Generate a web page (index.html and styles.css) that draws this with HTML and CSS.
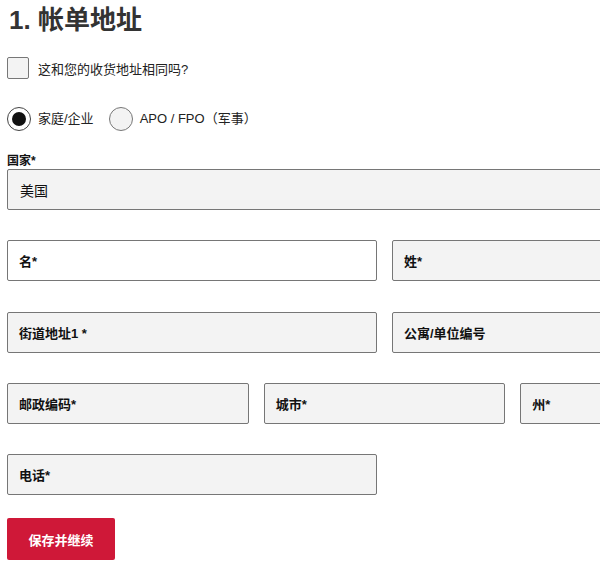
FILE: index.html
```html
<!DOCTYPE html>
<html lang="zh-CN">
<head>
<meta charset="utf-8">
<title>帐单地址</title>
<link rel="stylesheet" href="styles.css">
</head>
<body>
<div class="viewport">
<div class="form">
  <h1 class="title">1. 帐单地址</h1>

  <label class="check-row">
    <span class="checkbox"></span>
    <span class="check-text">这和您的收货地址相同吗?</span>
  </label>

  <div class="radio-row">
    <label class="radio-item">
      <span class="radio radio-on"><span class="radio-dot"></span></span>
      <span class="radio-text">家庭/企业</span>
    </label>
    <label class="radio-item">
      <span class="radio"></span>
      <span class="radio-text">APO / FPO（军事）</span>
    </label>
  </div>

  <div class="field-label">国家*</div>
  <div class="box box-select"><span class="value">美国</span></div>

  <div class="row row-2 gap-30">
    <div class="box box-white"><span class="ph">名*</span></div>
    <div class="box"><span class="ph">姓*</span></div>
  </div>

  <div class="row row-2 gap-31">
    <div class="box"><span class="ph">街道地址1 *</span></div>
    <div class="box"><span class="ph">公寓/单位编号</span></div>
  </div>

  <div class="row row-3 gap-30">
    <div class="box"><span class="ph">邮政编码*</span></div>
    <div class="box"><span class="ph">城市*</span></div>
    <div class="box"><span class="ph">州*</span></div>
  </div>

  <div class="row row-2 gap-30">
    <div class="box"><span class="ph">电话*</span></div>
    <div class="spacer"></div>
  </div>

  <button class="btn" type="button">保存并继续</button>
</div>
</div>
</body>
</html>
```

FILE: styles.css
```css
html, body {
  margin: 0;
  padding: 0;
  background: #ffffff;
  overflow: hidden;
}

body {
  font-family: "Liberation Sans", "Noto Sans CJK SC", sans-serif;
  color: #111111;
}

.viewport {
  width: 100%;
  overflow: hidden;
}

.form {
  width: 755px;
  padding: 0 7px;
  display: flex;
  flex-direction: column;
  align-items: flex-start;
}

.title {
  margin: 0;
  padding-top: 2px;
  font-size: 26px;
  line-height: 36px;
  font-weight: bold;
  color: #333333;
  margin-left: 2px;
}

.check-row {
  margin-top: 19px;
  display: flex;
  align-items: center;
  height: 22px;
}

.checkbox {
  width: 22px;
  height: 22px;
  box-sizing: border-box;
  border: 1px solid #777777;
  border-radius: 2px;
  background: #f3f3f3;
}

.check-text {
  margin-left: 9px;
  font-size: 13px;
  color: #222222;
}

.radio-row {
  margin-top: 28px;
  display: flex;
  align-items: center;
  height: 24px;
  gap: 15px;
}

.radio-item {
  display: flex;
  align-items: center;
}

.radio {
  width: 24px;
  height: 24px;
  box-sizing: border-box;
  border: 1px solid #777777;
  border-radius: 50%;
  background: #f3f3f3;
  display: flex;
  align-items: center;
  justify-content: center;
}

.radio-on {
  border-color: #444444;
  background: #ffffff;
}

.radio-dot {
  width: 14px;
  height: 14px;
  border-radius: 50%;
  background: #111111;
}

.radio-text {
  margin-left: 7px;
  font-size: 13px;
  line-height: 16px;
  margin-top: -1px;
  color: #222222;
}

.field-label {
  margin-top: 22px;
  font-size: 12px;
  line-height: 16px;
  font-weight: bold;
  color: #111111;
}

.box {
  height: 41px;
  box-sizing: border-box;
  border: 1px solid #767676;
  border-radius: 2px;
  background: #f3f3f3;
  display: flex;
  align-items: center;
  padding-left: 11px;
}

.box-select {
  width: 100%;
}

.box-white {
  background: #ffffff;
}

.value {
  font-size: 14px;
  color: #111111;
  padding-left: 1px;
}

.ph {
  font-size: 13px;
  font-weight: bold;
  color: #111111;
}

.row {
  width: 100%;
  display: grid;
  column-gap: 15px;
}

.row-2 {
  grid-template-columns: 1fr 1fr;
}

.row-3 {
  grid-template-columns: 1fr 1fr 1fr;
}

.gap-30 {
  margin-top: 30px;
}

.gap-31 {
  margin-top: 31px;
}

.btn {
  margin-top: 23px;
  height: 42px;
  width: 108px;
  border: none;
  border-radius: 2px;
  background: #cf1838;
  color: #ffffff;
  font-family: "Liberation Sans", "Noto Sans CJK SC", sans-serif;
  font-size: 13px;
  font-weight: bold;
  padding: 0;
}
```
